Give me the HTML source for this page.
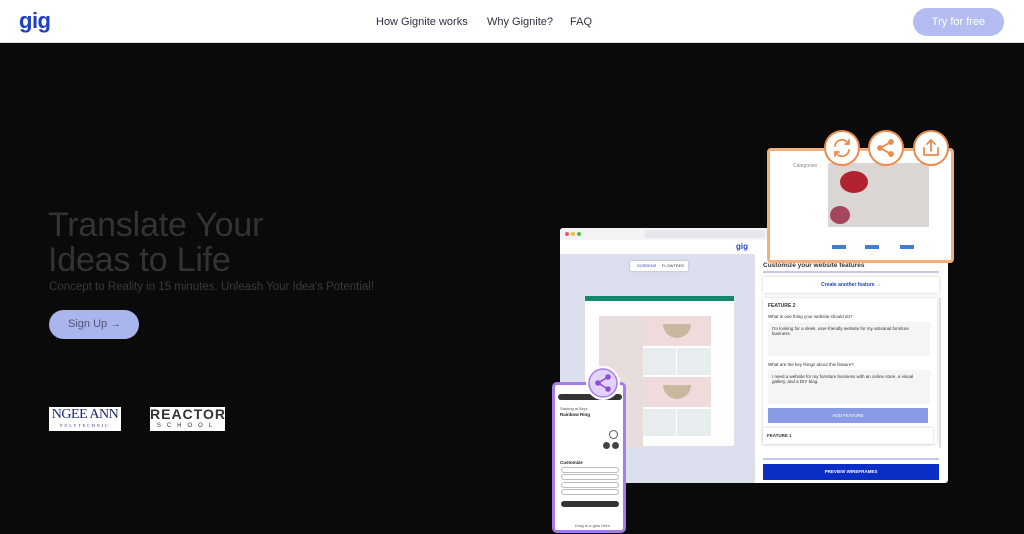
<!DOCTYPE html>
<html><head><meta charset="utf-8"><style>
*{margin:0;padding:0;box-sizing:border-box}
body{width:1024px;height:534px;overflow:hidden;background:#0a0a0a;font-family:"Liberation Sans",sans-serif;position:relative}
.a{position:absolute}
.hdr{left:0;top:0;width:1024px;height:43px;background:#fff;border-bottom:1px solid #ddd}
.nav{font-size:11px;color:#2c2f45;top:16px}
.t{color:#333;font-size:34px;font-weight:normal;left:48px;letter-spacing:-0.2px}
.ln{height:2px;background:#e2e4ee}
.sm{font-size:4px;color:#555}
</style></head><body>
<div class="a hdr"></div>
<div class="a" style="left:19px;top:8px;font-size:22px;font-weight:bold;color:#1d3fc2;letter-spacing:-0.5px">gig</div>
<div class="a nav" style="left:376px">How Gignite works</div>
<div class="a nav" style="left:487px">Why Gignite?</div>
<div class="a nav" style="left:570px">FAQ</div>
<div class="a" style="left:913px;top:8px;width:91px;height:28px;border-radius:14px;background:#b3bdf1;color:#fff;font-size:11px;text-align:center;line-height:28px">Try for free</div>

<div class="a t" style="top:206px">Translate Your</div>
<div class="a t" style="top:241px">Ideas to Life</div>
<div class="a" style="left:49px;top:281px;font-size:11.5px;color:#3a3a3a">Concept to Reality in 15 minutes. Unleash Your Idea's Potential!</div>
<div class="a" style="left:49px;top:310px;width:90px;height:29px;border-radius:15px;background:#a9b5ec;color:#4f5578;font-size:11px;line-height:29px;padding-left:19px">Sign Up →</div>
<div class="a" style="left:49px;top:407px;width:72px;height:24px;background:#fff;text-align:center;color:#1e2a70;font-family:'Liberation Serif',serif">
<div style="font-size:14px;line-height:16px;letter-spacing:-0.5px">NGEE ANN</div><div style="font-size:4px;letter-spacing:2px;line-height:5px">POLYTECHNIC</div></div>
<div class="a" style="left:150px;top:407px;width:75px;height:24px;background:#fff;text-align:center;color:#333">
<div style="font-size:14px;line-height:15px;letter-spacing:1px;font-weight:bold">REACTOR</div><div style="font-size:6px;letter-spacing:6px;line-height:8px">SCHOOL</div></div>

<!-- browser -->
<div class="a" style="left:560px;top:228px;width:388px;height:255px;background:#fff;border-radius:3px;overflow:hidden">
 <div class="a" style="left:0;top:0;width:388px;height:12px;background:#f3f3f5"></div>
 <div class="a" style="left:5px;top:4px;width:4px;height:4px;border-radius:2px;background:#ee5b55"></div>
 <div class="a" style="left:11px;top:4px;width:4px;height:4px;border-radius:2px;background:#f3b73b"></div>
 <div class="a" style="left:17px;top:4px;width:4px;height:4px;border-radius:2px;background:#53c041"></div>
 <div class="a" style="left:85px;top:2px;width:120px;height:8px;background:#e6e7ee;border-radius:2px"></div>
 <div class="a" style="left:176px;top:14px;font-size:8px;font-weight:bold;color:#2645c4">gig</div>
 <div class="a" style="left:0;top:26px;width:195px;height:229px;background:#dcdfee"></div>
 <div class="a" style="left:70px;top:33px;width:58px;height:10px;background:#fff;border-radius:2px;box-shadow:0 0 2px #aaa;font-size:4px;line-height:10px;color:#2645c4;padding-left:7px">SCREENS &nbsp;&nbsp;&nbsp;&nbsp;<span style="color:#444">FLOWTREE</span></div>
 <div class="a" style="left:25px;top:68px;width:149px;height:150px;background:#fff">
  <div style="height:5px;background:#12876a"></div>
  <div class="a" style="left:14px;top:20px;width:44px;height:132px;background:#e8dddd"></div>
  <div class="a" style="left:58px;top:20px;width:68px;height:30px;background:#f0dbdc"></div>
  <div class="a" style="left:78px;top:28px;width:28px;height:14px;background:#c9b7a0;border-radius:0 0 14px 14px"></div>
  <div class="a" style="left:58px;top:52px;width:33px;height:27px;background:#e7ecee"></div>
  <div class="a" style="left:92px;top:52px;width:34px;height:27px;background:#e7ecee"></div>
  <div class="a" style="left:58px;top:81px;width:68px;height:30px;background:#f0dbdc"></div>
  <div class="a" style="left:78px;top:89px;width:28px;height:14px;background:#c9b7a0;border-radius:0 0 14px 14px"></div>
  <div class="a" style="left:58px;top:113px;width:33px;height:27px;background:#e7ecee"></div>
  <div class="a" style="left:92px;top:113px;width:34px;height:27px;background:#e7ecee"></div>
 </div>
 <div class="a" style="left:203px;top:34px;font-size:6.5px;font-weight:bold;color:#333">Customize your website features</div>
 <div class="a ln" style="left:203px;top:43px;width:176px;background:#c3cbe9"></div>
 <div class="a" style="left:203px;top:49px;width:176px;height:16px;box-shadow:0 0 3px #ccc;font-size:5px;color:#2645c4;text-align:center;line-height:16px;font-weight:bold">Create another feature →</div>
 <div class="a" style="left:203px;top:70px;width:174px;height:146px;box-shadow:0 0 3px #ccc">
  <div class="a" style="left:5px;top:5px;font-size:5px;font-weight:bold;color:#333">FEATURE 2</div>
  <div class="a" style="left:5px;top:16px;font-size:4.5px;color:#333">What is one thing your website should do?</div>
  <div class="a" style="left:5px;top:24px;width:162px;height:34px;background:#f4f5f7;font-size:4.5px;color:#333;padding:4px">I'm looking for a sleek, user-friendly website for my artisanal furniture business.</div>
  <div class="a" style="left:5px;top:64px;font-size:4.5px;color:#333">What are the key things about this feature?</div>
  <div class="a" style="left:5px;top:72px;width:162px;height:34px;background:#f4f5f7;font-size:4.5px;color:#333;padding:4px">I need a website for my furniture business with an online store, a visual gallery, and a DIY blog.</div>
  <div class="a" style="left:5px;top:110px;width:160px;height:15px;background:#8a9be6;color:#fff;font-size:4.5px;text-align:center;line-height:15px">ADD FEATURE</div>
  <div class="a" style="left:0;top:130px;width:170px;height:16px;box-shadow:0 0 3px #ccc;font-size:4.5px;font-weight:bold;color:#333;line-height:16px;padding-left:4px">FEATURE 1</div>
 </div>
 <div class="a" style="left:379px;top:70px;width:2px;height:150px;background:#ddd"></div>
 <div class="a ln" style="left:203px;top:230px;width:176px;background:#c3cbe9"></div>
 <div class="a" style="left:203px;top:236px;width:176px;height:16px;background:#0b2ec4;color:#fff;font-size:4.5px;text-align:center;line-height:16px;font-weight:bold">PREVIEW WIREFRAMES</div>
</div>

<!-- orange card -->
<div class="a" style="left:767px;top:148px;width:187px;height:115px;background:#fff;border:3px solid #f2b17c;border-radius:4px">
 <div class="a" style="left:23px;top:12px;font-size:5px;color:#888">Categories</div>
 <div class="a" style="left:58px;top:12px;width:101px;height:64px;background:#d9d6d4"></div>
 <div class="a" style="left:70px;top:20px;width:28px;height:22px;border-radius:50%;background:#b3232f"></div>
 <div class="a" style="left:60px;top:55px;width:20px;height:18px;border-radius:50%;background:#a3465e"></div>
 <div class="a" style="left:62px;top:94px;width:14px;height:4px;background:#3b7fdb"></div>
 <div class="a" style="left:95px;top:94px;width:14px;height:4px;background:#3b7fdb"></div>
 <div class="a" style="left:130px;top:94px;width:14px;height:4px;background:#3b7fdb"></div>
</div>
<svg class="a" style="left:820px;top:128px" width="140" height="42" viewBox="0 0 140 42">
 <g fill="#fff" stroke="#ec8a4a" stroke-width="2">
  <circle cx="22" cy="20" r="17"/><circle cx="66" cy="20" r="17"/><circle cx="111" cy="20" r="17"/>
 </g>
 <g fill="none" stroke="#ec8a4a" stroke-width="1.8" stroke-linecap="round">
  <path d="M15 18a7 7 0 0 1 12-4l2 2M29 22a7 7 0 0 1-12 4l-2-2M29 12v4h-4M15 28v-4h4"/>
  <circle cx="60" cy="20" r="2" fill="#ec8a4a"/><circle cx="71" cy="14" r="2" fill="#ec8a4a"/><circle cx="71" cy="26" r="2" fill="#ec8a4a"/>
  <path d="M60 20l11-6M60 20l11 6"/>
  <path d="M104 20v7h14v-7M111 23v-11M107 16l4-4 4 4"/>
 </g>
</svg>

<!-- phone -->
<div class="a" style="left:552px;top:382px;width:74px;height:151px;background:#fff;border:3px solid #a67de6;border-radius:5px">
 <div class="a" style="left:3px;top:9px;width:64px;height:6px;background:#333;border-radius:3px"></div>
 <div class="a sm" style="left:5px;top:21px">Starting at $xyz</div>
 <div class="a" style="left:5px;top:27px;font-size:4.5px;font-weight:bold;color:#222">Rainbow Ring</div>
 <div class="a" style="left:54px;top:45px;width:9px;height:9px;border-radius:5px;border:1px solid #555"></div>
 <div class="a" style="left:48px;top:57px;width:7px;height:7px;border-radius:4px;background:#444"></div>
 <div class="a" style="left:57px;top:57px;width:7px;height:7px;border-radius:4px;background:#444"></div>
 <div class="a" style="left:5px;top:75px;font-size:4.5px;font-weight:bold;color:#222">Customize</div>
 <div class="a" style="left:6px;top:82px;width:58px;height:6px;border:1px solid #bbb;border-radius:3px"></div>
 <div class="a" style="left:6px;top:89px;width:58px;height:6px;border:1px solid #bbb;border-radius:3px"></div>
 <div class="a" style="left:6px;top:97px;width:58px;height:6px;border:1px solid #bbb;border-radius:3px"></div>
 <div class="a" style="left:6px;top:104px;width:58px;height:6px;border:1px solid #bbb;border-radius:3px"></div>
 <div class="a" style="left:6px;top:116px;width:58px;height:6px;background:#333;border-radius:3px"></div>
 <div class="a sm" style="left:20px;top:138px">Drag to a gido Here</div>
</div>
<svg class="a" style="left:585px;top:365px" width="36" height="36" viewBox="0 0 36 36">
 <circle cx="18" cy="18" r="17" fill="#fff"/><circle cx="18" cy="18" r="14" fill="#e3d3fb" stroke="#a67de6" stroke-width="1.5"/>
 <g fill="#8d4fd9" stroke="#8d4fd9" stroke-width="1.6"><circle cx="13" cy="18" r="2"/><circle cx="23" cy="12" r="2"/><circle cx="23" cy="24" r="2"/><path d="M13 18l10-6M13 18l10 6" fill="none"/></g>
</svg>
</body></html>
